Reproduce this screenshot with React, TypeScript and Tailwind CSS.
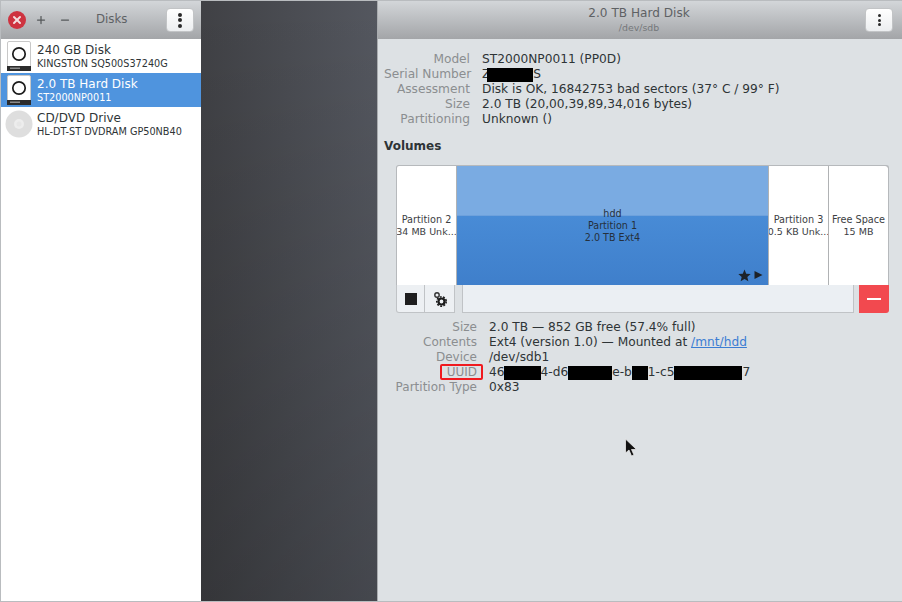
import { Minus, Plus, X } from "lucide-react";

const font = { fontFamily: '"DejaVu Sans", sans-serif' };

const disks = [
  { name: "240 GB Disk", sub: "KINGSTON SQ500S37240G", kind: "hdd" },
  { name: "2.0 TB Hard Disk", sub: "ST2000NP0011", kind: "hdd", active: true },
  { name: "CD/DVD Drive", sub: "HL-DT-ST DVDRAM GP50NB40", kind: "cd" },
];

function HddIcon() {
  return (
    <svg width="24" height="30" viewBox="0 0 24 30" className="shrink-0">
      <rect x="0.5" y="0.5" width="23" height="29" rx="1.5" fill="#fff" stroke="#c8c8c8" />
      <rect x="0" y="25" width="24" height="5" fill="#2c2c2c" />
      <rect x="3" y="26.5" width="10" height="1.5" fill="#8a8a8a" />
      <circle cx="12" cy="13" r="6.2" fill="#fff" stroke="#1c1c1c" strokeWidth="1.7" />
    </svg>
  );
}

function CdIcon() {
  return (
    <svg width="28" height="28" viewBox="0 0 28 28" className="shrink-0 -ml-[2px] mr-[-2px]">
      <circle cx="14" cy="14" r="13.5" fill="#dedede" />
      <circle cx="14" cy="14" r="5" fill="#ededed" />
      <circle cx="14" cy="14" r="2.5" fill="#e6e6e6" />
    </svg>
  );
}

function Dots({ big }: { big?: boolean }) {
  const s = big ? "w-[4px] h-[4px]" : "w-[3px] h-[3px]";
  return (
    <button className="w-[28px] h-[24px] rounded-[4px] bg-gradient-to-b from-white to-[#eceef0] border border-[#c2c4c6] flex flex-col items-center justify-center gap-[1.5px]">
      <span className={`${s} rounded-full bg-[#2a2a2a]`} />
      <span className={`${s} rounded-full bg-[#2a2a2a]`} />
      <span className={`${s} rounded-full bg-[#2a2a2a]`} />
    </button>
  );
}

function Bar({ w }: { w: string }) {
  return <span className={`inline-block h-[14px] align-middle bg-black ${w}`} />;
}

function Row({ label, labelW, children }: { label: React.ReactNode; labelW: string; children: React.ReactNode }) {
  return (
    <div className="flex h-[15px] items-center leading-[15px] whitespace-nowrap text-[12.2px]">
      <div className={`${labelW} text-right text-[#8b8e90] shrink-0`}>{label}</div>
      <div className="ml-[12px] text-[#2e3436]">{children}</div>
    </div>
  );
}

function Segment({ title, sub, w, last }: { title: string; sub: string; w: string; last?: boolean }) {
  return (
    <div className={`${w} shrink-0 bg-white flex flex-col items-center justify-center leading-[12px] text-[#3c4043] whitespace-nowrap overflow-hidden ${last ? "rounded-tr-[3px]" : ""}`}>
      <span className="text-[9.7px]">{title}</span>
      <span className="text-[9.5px]">{sub}</span>
    </div>
  );
}

export default function App() {
  return (
    <div style={font} className="relative flex w-[902px] h-[602px] overflow-hidden text-[12px] bg-[#b9bcbf] pt-px pb-px pl-px">
      {/* sidebar */}
      <div className="w-[200px] shrink-0 flex flex-col bg-white">
        <div className="h-[38px] pl-[7px] pr-[7px] flex items-center bg-gradient-to-b from-[#d3d6d9] to-[#a3a5a8] shrink-0">
          <div className="w-[18px] h-[18px] rounded-full bg-[#ce3340] flex items-center justify-center">
            <X size={12} strokeWidth={4} className="text-[#f4dfe0]" />
          </div>
          <Plus size={12} strokeWidth={2.5} className="ml-[9px] text-[#55585b]" />
          <Minus size={12} strokeWidth={2.5} className="ml-[12px] text-[#55585b]" />
          <span className="ml-[25px] text-[11.8px] text-[#5e6164]">Disks</span>
          <div className="ml-auto">
            <Dots big />
          </div>
        </div>
        <div className="flex-1">
          {disks.map((d) => (
            <div
              key={d.name}
              className={`h-[34px] pl-[6px] flex items-center gap-[6px] whitespace-nowrap ${d.active ? "bg-[#4f94de] text-white" : "text-[#2e3436]"}`}
            >
              {d.kind === "hdd" ? <HddIcon /> : <CdIcon />}
              <div className="flex flex-col">
                <span className="text-[12px] leading-[16px]">{d.name}</span>
                <span className="text-[9.7px] leading-[12px]">{d.sub}</span>
              </div>
            </div>
          ))}
        </div>
      </div>

      {/* desktop showing through between the panes */}
      <div className="w-[176px] shrink-0 bg-[linear-gradient(to_bottom,rgba(0,0,0,0),rgba(0,0,0,0.18)),linear-gradient(to_right,#404145,#54575f)]" />

      {/* details */}
      <div className="flex-1 flex flex-col bg-[#dde1e4] border-l border-[#a9acaf]">
        <div className="h-[38px] shrink-0 flex items-center pr-[9px] bg-gradient-to-b from-[#d3d6d9] to-[#a3a5a8]">
          <div className="flex-1 text-center pl-[35px]">
            <div className="text-[12.1px] leading-[15px] text-[#5e6164]">2.0 TB Hard Disk</div>
            <div className="text-[9.4px] leading-[13px] text-[#74777a]">/dev/sdb</div>
          </div>
          <Dots />
        </div>

        <div className="pt-[13px] pl-[6px]">
          <Row label="Model" labelW="w-[86px]">ST2000NP0011 (PP0D)</Row>
          <Row label="Serial Number" labelW="w-[86px]">
            Z<span className="-ml-[3px]"><Bar w="w-[46px]" /></span>S
          </Row>
          <Row label="Assessment" labelW="w-[86px]">Disk is OK, 16842753 bad sectors (37° C / 99° F)</Row>
          <Row label="Size" labelW="w-[86px]">2.0 TB (20,00,39,89,34,016 bytes)</Row>
          <Row label="Partitioning" labelW="w-[86px]">Unknown ()</Row>
        </div>

        <div className="mt-[12px] pl-[6px] font-bold text-[#2e3436] leading-[15px]">Volumes</div>

        <div className="mt-[11px] ml-[18px] w-[493px]">
          <div className="flex h-[120px] rounded-t-[3px] border border-b-0 border-[#b6b9bc] bg-[#b0b2b4] gap-px overflow-hidden">
            <Segment w="w-[59px]" title="Partition 2" sub="34 MB Unk..." />
            <div className="relative flex-1 flex flex-col items-center justify-center text-[9.6px] leading-[12px] text-[#25303c] bg-gradient-to-b from-[#4f94de] to-[#3f7fcb] overflow-hidden">
              <div className="absolute inset-x-0 top-0 h-[50px] bg-[#7aabe2] border-b border-[#6ea1dc]" />
              <span className="relative">hdd</span>
              <span className="relative">Partition 1</span>
              <span className="relative">2.0 TB Ext4</span>
              <div className="absolute right-[5px] bottom-[3px] flex items-center gap-[3px] text-[#1d2228]">
                <svg width="13" height="13" viewBox="0 0 24 24" fill="currentColor">
                  <polygon points="12,1 15.2,8.6 23.4,9.3 17.2,14.7 19.1,22.8 12,18.5 4.9,22.8 6.8,14.7 0.6,9.3 8.8,8.6" />
                </svg>
                <svg width="9" height="10" viewBox="0 0 9 10" fill="currentColor" className="mb-[2px]">
                  <polygon points="0.5,1 8.5,5 0.5,9" />
                </svg>
              </div>
            </div>
            <Segment w="w-[59px]" title="Partition 3" sub="0.5 KB Unk..." />
            <Segment w="w-[59px]" title="Free Space" sub="15 MB" last />
          </div>
          <div className="flex h-[28px]">
            <div className="flex border border-t-0 border-[#c0c3c6] rounded-bl-[3px] bg-[#edf0f3]">
              <div className="w-[28px] flex items-center justify-center border-r border-[#c0c3c6]">
                <span className="w-[12px] h-[12px] bg-[#1f1f1f]" />
              </div>
              <div className="w-[29px] flex items-center justify-center">
                <svg width="14" height="16" viewBox="0 0 14 16" fill="none">
                  <circle cx="4" cy="4" r="2.2" stroke="#333" strokeWidth="1.4" />
                  <circle cx="8.5" cy="10.5" r="3" stroke="#1c1c1c" strokeWidth="2.2" />
                  <circle cx="8.5" cy="10.5" r="4.7" stroke="#1c1c1c" strokeWidth="1.6" strokeDasharray="1.9 1.4" />
                </svg>
              </div>
            </div>
            <div className="ml-[7px] w-[392px] bg-[#ebeff3] border-l border-r border-b border-[#c0c3c6]" />
            <div className="ml-[5px] flex-1 bg-[#f2494f] rounded-br-[3px] flex items-center justify-center">
              <span className="w-[14px] h-[2px] bg-white" />
            </div>
          </div>
        </div>

        <div className="mt-[7px] pl-[6px]">
          <Row label="Size" labelW="w-[93px] text-[12px]">2.0 TB — 852 GB free (57.4% full)</Row>
          <Row label="Contents" labelW="w-[93px] text-[12px]">
            Ext4 (version 1.0) — Mounted at <span className="text-[#3b7dd3] underline">/mnt/hdd</span>
          </Row>
          <Row label="Device" labelW="w-[93px] text-[12px]">/dev/sdb1</Row>
          <Row
            label={
              <span className="relative">
                UUID
                <span className="absolute -left-[7px] -right-[6px] -top-[1px] -bottom-[1px] rounded-[2px] border-2 border-[#f01a1f]" />
              </span>
            }
            labelW="w-[93px] text-[12px]"
          >
            46<span className="-ml-px"><Bar w="w-[37px]" /></span>4-d6<Bar w="w-[44px]" />e-b<Bar w="w-[16px]" />1-c5<Bar w="w-[68px]" />7
          </Row>
          <Row label="Partition Type" labelW="w-[93px] text-[12px]">0x83</Row>
        </div>
      </div>

      {/* mouse pointer */}
      <svg width="16" height="20" viewBox="0 0 16 20" className="absolute left-[624px] top-[438px]">
        <path d="M1.5 1 L1.5 15 L5 12 L7.5 18 L10 17 L7.5 11.5 L12.5 11.5 Z" fill="#111" stroke="#e8e8e8" strokeWidth="0.8" />
      </svg>
    </div>
  );
}
